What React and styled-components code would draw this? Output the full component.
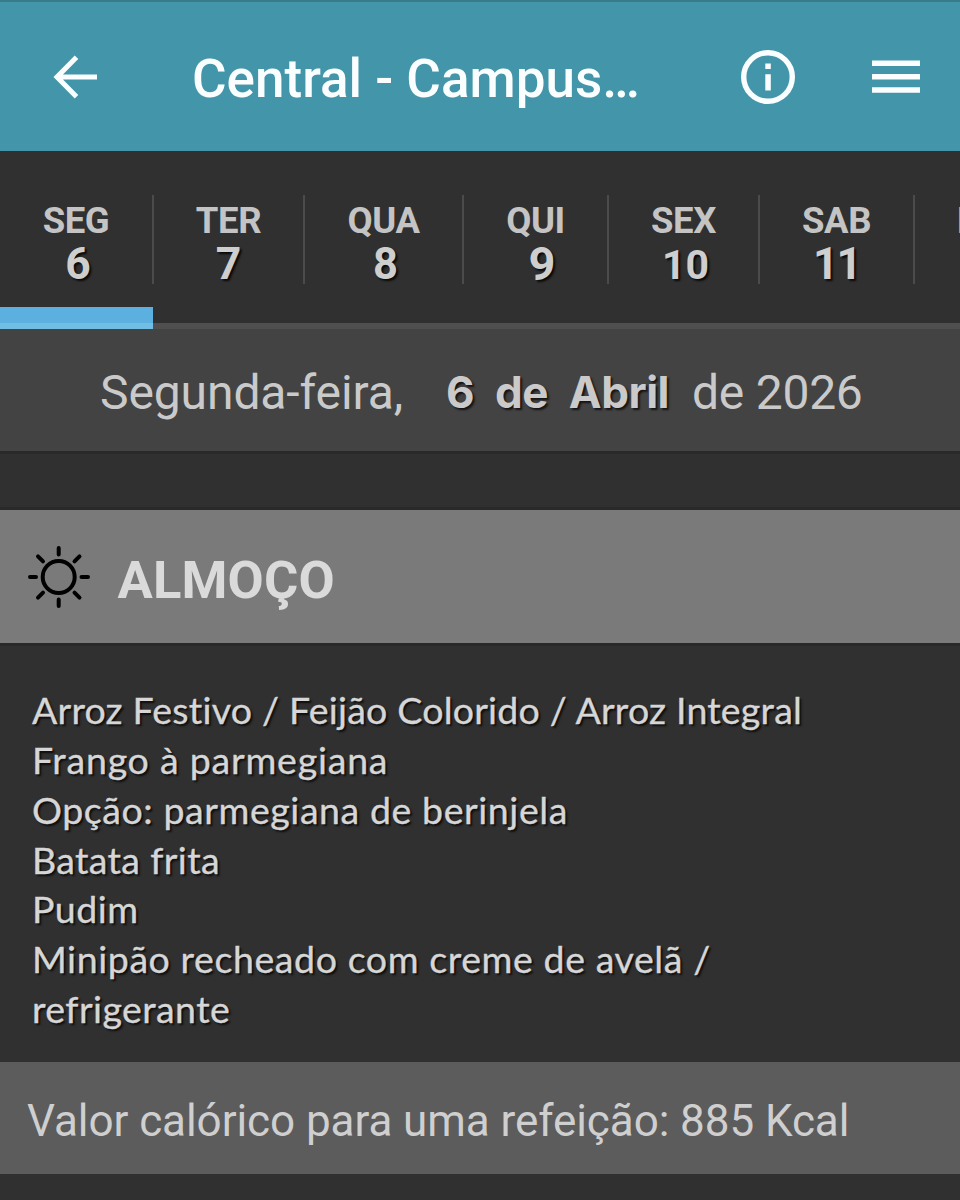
import React from "react";
import styled, { createGlobalStyle } from "styled-components";

const GlobalStyle = createGlobalStyle`
  * { box-sizing: border-box; }
  html, body { margin: 0; padding: 0; background: #303030; overflow: hidden; }
`;

const Screen = styled.main`
  display: flex;
  flex-direction: column;
  width: 960px;
  height: 1200px;
  overflow: hidden;
  background: #303030;
  color: #cacaca;
  font-family: Roboto, "Liberation Sans", sans-serif;
  white-space: nowrap;
`;

const AppBar = styled.header`
  display: flex;
  align-items: center;
  height: 151px;
  flex: none;
  padding: 1px 40px 0 53px;
  background: #4396a9;
  border-top: 2px solid #3a7b8a;
  color: #fafeff;
`;

const Title = styled.h1`
  flex: 1;
  margin: 4px 0 0 94px;
  font-size: 53px;
  line-height: 62px;
  font-weight: 500;
  letter-spacing: ${(p) => p.$spacing}px;
`;

const IconButton = styled.button`
  display: flex;
  flex: none;
  padding: 0;
  margin: 0 0 0 ${(p) => p.$gap || 0}px;
  border: 0;
  background: none;
  color: inherit;
`;

const Tabs = styled.nav`
  display: flex;
  flex: none;
  height: 178px;
  overflow: hidden;
  background: linear-gradient(#303030 172px, #4f4f4f 172px);
`;

const Tab = styled.div`
  display: flex;
  flex-direction: column;
  justify-content: space-between;
  flex: none;
  width: ${(p) => p.$width}px;
  height: 178px;
  padding-top: 44px;
`;

const ActiveBar = styled.div`
  width: 153px;
  height: 22px;
  background: linear-gradient(#5cb0e0 16px, #70bde5 16px);
`;

const TabBody = styled.div`
  display: flex;
  flex-direction: column;
  align-items: ${(p) => (p.$cut ? "flex-start" : "center")};
  padding-left: ${(p) => (p.$cut ? 42 : 0)}px;
  height: 89px;
  border-right: 2px solid #4b4b4b;
`;

const Weekday = styled.span`
  margin: 7px 0 6px;
  font-size: 36.5px;
  line-height: 37px;
  font-weight: 700;
  letter-spacing: -0.4px;
  color: #c4c4c4;
`;

const DayNumber = styled.span`
  margin: ${(p) => p.$drop || 0}px 0 0 ${(p) => p.$shift || 0}px;
  font-size: ${(p) => p.$size || 44.5}px;
  line-height: 38px;
  font-weight: 700;
  letter-spacing: ${(p) => p.$spacing || 0}px;
  color: #cecece;
  text-shadow: 2px 2px 2px #0a0a0a;
`;

const DateBar = styled.div`
  display: flex;
  flex: none;
  align-items: center;
  height: 125px;
  padding: 5px 0 0 100px;
  background: #434343;
  border-bottom: 3px solid #292929;
  font-size: 48px;
  line-height: 56px;
`;

const DateText = styled.span`
  width: ${(p) => p.$width}px;
  letter-spacing: ${(p) => p.$spacing}px;
`;

const DateStrong = styled(DateText)`
  margin-top: -2px;
  font-family: Inter, Roboto, sans-serif;
  font-size: 44px;
  font-weight: 700;
  word-spacing: 11px;
  text-shadow: 2px 2px 2px #151515;
`;

const MealHeader = styled.section`
  display: flex;
  flex: none;
  align-items: center;
  height: 139px;
  margin-top: 53px;
  padding: 0 0 0 27px;
  background: #7a7a7a;
  border-top: 3px solid #292929;
  border-bottom: 3px solid #292929;
`;

const MealTitle = styled.h2`
  margin: 6px 0 0 26.5px;
  font-size: 52.5px;
  line-height: 60px;
  font-weight: 700;
  letter-spacing: ${(p) => p.$spacing}px;
  color: #dadada;
`;

const Dishes = styled.ul`
  flex: none;
  height: 416px;
  margin: 0;
  padding: 39.4px 0 0 32px;
  list-style: none;
  font-family: Lato, Inter, sans-serif;
  font-size: 37.5px;
  line-height: 49.7px;
  color: #d6d6d6;
  -webkit-text-stroke: 0.35px #d6d6d6;
  text-shadow: 2px 2px 2px #0d0d0d;
`;

const Dish = styled.li`
  letter-spacing: ${(p) => p.$spacing}px;
`;

const Calories = styled.footer`
  flex: none;
  height: 112px;
  padding: 34px 0 0 27px;
  background: #5c5c5c;
  font-size: 44px;
  line-height: 50px;
  letter-spacing: ${(p) => p.$spacing}px;
  color: #cfcfcf;
`;

const days = [
  { name: "SEG", number: "6", width: 154, active: true, shift: 4 },
  { name: "TER", number: "7", width: 151 },
  { name: "QUA", number: "8", width: 159, drop: 1, shift: 4, size: 43.5 },
  { name: "QUI", number: "9", width: 145, shift: 13, size: 47 },
  { name: "SEX", number: "10", width: 151, drop: 1, shift: 4, size: 41 },
  { name: "SAB", number: "11", width: 155, spacing: -2 },
  { name: "DOM", width: 155, cut: true },
];

const dishes = [
  ["Arroz Festivo / Feijão Colorido / Arroz Integral", 0.21],
  ["Frango à parmegiana", 0.78],
  ["Opção: parmegiana de berinjela", 0.57],
  ["Batata frita", 0.35],
  ["Pudim", 0.5],
  ["Minipão recheado com creme de avelã /", 0.58],
  ["refrigerante", 0.42],
];

const BackIcon = () => (
  <svg width="45" height="44" viewBox="0 0 45 44" fill="none" stroke="currentColor" strokeWidth="5">
    <path d="M23.500 2.300 L4 22 L23.500 41.800 M3.500 22 H44" />
  </svg>
);

const InfoIcon = () => (
  <svg width="54" height="54" viewBox="0 0 54 54">
    <circle cx="27" cy="27" r="24.300" fill="none" stroke="currentColor" strokeWidth="5.400" />
    <path d="M24.300 13.500h5.500v5.400h-5.500zM24.300 24.300h5.500V40.500h-5.500z" fill="currentColor" />
  </svg>
);

const MenuIcon = () => (
  <svg width="48" height="34" viewBox="0 0 48 34" fill="currentColor">
    <path d="M0 .4h48v5.600H0zM0 14h48v5.600H0zM0 27.200h48v5.600H0z" />
  </svg>
);

const SunIcon = () => (
  <svg width="64" height="64" viewBox="0 0 64 64" fill="none" stroke="#000" strokeWidth="4" strokeLinecap="round">
    <circle cx="31.700" cy="32" r="16" />
    <path d="M31.700 3v6.500M31.700 54.500v6.500M3 32h6M54.500 32h6.500M11 11.300l5 5M47.500 47.700l5 5M11 52.700l5-5M47.500 16.300l5-5" />
  </svg>
);

export default function App() {
  return (
    <Screen>
      <GlobalStyle />
      <AppBar>
        <IconButton aria-label="Voltar"><BackIcon /></IconButton>
        <Title $spacing={0}>Central - Campus…</Title>
        <IconButton aria-label="Informações"><InfoIcon /></IconButton>
        <IconButton aria-label="Menu" $gap={77}><MenuIcon /></IconButton>
      </AppBar>
      <Tabs>
        {days.map((d) => (
          <Tab key={d.name} $width={d.width}>
            <TabBody $cut={d.cut}>
              <Weekday>{d.name}</Weekday>
              {d.number && (
                <DayNumber $drop={d.drop} $shift={d.shift} $size={d.size} $spacing={d.spacing}>{d.number}</DayNumber>
              )}
            </TabBody>
            {d.active && <ActiveBar />}
          </Tab>
        ))}
      </Tabs>
      <DateBar>
        <DateText $width={346} $spacing={-0.1}>Segunda-feira,</DateText>
        <DateStrong $width={246} $spacing={-0.5}>6 de Abril</DateStrong>
        <DateText $width={200} $spacing={-0.25}>de 2026</DateText>
      </DateBar>
      <MealHeader>
        <SunIcon />
        <MealTitle $spacing={0.15}>ALMOÇO</MealTitle>
      </MealHeader>
      <Dishes>
        {dishes.map(([name, spacing]) => (
          <Dish key={name} $spacing={spacing}>{name}</Dish>
        ))}
      </Dishes>
      <Calories $spacing={-0.07}>Valor calórico para uma refeição: 885 Kcal</Calories>
    </Screen>
  );
}
